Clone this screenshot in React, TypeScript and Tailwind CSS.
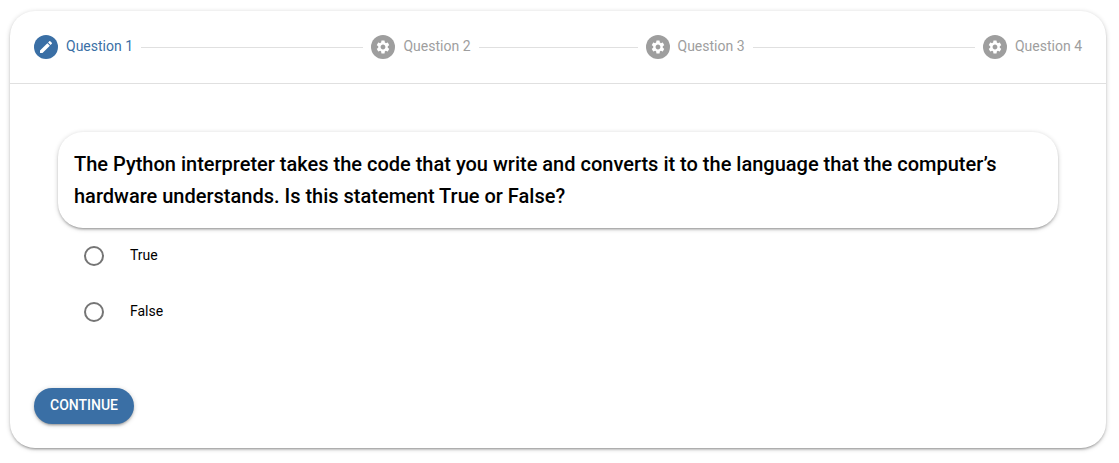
import { Fragment, useState } from "react";
import { MdEdit, MdSettings } from "react-icons/md";

const steps = [
  { title: "Question 1", line: "grow-[221]" },
  { title: "Question 2", line: "grow-[158]" },
  { title: "Question 3", line: "grow-[221]" },
  { title: "Question 4", line: "" },
];

const options = ["True", "False"];

const elevation =
  "shadow-[0_1px_5px_rgba(0,0,0,0.2),0_2px_2px_rgba(0,0,0,0.14),0_3px_1px_-2px_rgba(0,0,0,0.12)]";

function Stepper({ current }: { current: number }) {
  return (
    <nav
      aria-label="Questions"
      className="flex h-[73px] items-center gap-2 border-b border-black/12 px-6"
    >
      {steps.map((step, index) => {
        const active = index === current;
        const Icon = active ? MdEdit : MdSettings;
        return (
          <Fragment key={step.title}>
            <div
              aria-current={active ? "step" : undefined}
              className={`flex items-center gap-2 whitespace-nowrap ${
                active ? "text-[#3a6fa5]" : "text-[#9e9e9e]"
              }`}
            >
              <span
                className={`flex size-6 items-center justify-center rounded-full text-white ${
                  active ? "bg-[#3a6fa5]" : "bg-[#9e9e9e]"
                }`}
              >
                <Icon className="size-4" aria-hidden="true" />
              </span>
              <span className="pb-0.5 text-sm leading-[14px]">{step.title}</span>
            </div>
            {step.line && <div className={`h-px basis-0 bg-black/12 ${step.line}`} />}
          </Fragment>
        );
      })}
    </nav>
  );
}

export default function App() {
  const [answer, setAnswer] = useState<string | null>(null);

  return (
    <main className="bg-white pt-[11px] pr-[13px] pb-[15px] pl-2.5 font-[Roboto,sans-serif] text-black">
      <form
        onSubmit={(event) => event.preventDefault()}
        className={`rounded-[25px] bg-white ${elevation}`}
      >
        <Stepper current={0} />
        <fieldset aria-labelledby="question" className="px-12 pt-12">
          <h1
            id="question"
            className={`rounded-[25px] p-4 text-xl leading-8 font-medium ${elevation}`}
          >
            The Python interpreter takes the code that you write and converts it to the language
            that the computer’s hardware understands. Is this statement True or False?
          </h1>
          <div className="px-4">
            {options.map((option) => (
              <label key={option} className="flex h-14 cursor-pointer items-center gap-4 text-sm">
                <span className="flex size-10 items-center justify-center">
                  <input
                    type="radio"
                    name="answer"
                    value={option}
                    checked={answer === option}
                    onChange={() => setAnswer(option)}
                    className="size-5 cursor-pointer appearance-none rounded-full border-2 border-[#757575] checked:border-[#3a6fa5] checked:bg-[#3a6fa5] checked:bg-clip-content checked:p-[3px]"
                  />
                </span>
                <span className="pb-0.5">{option}</span>
              </label>
            ))}
          </div>
        </fieldset>
        <div className="px-6 pt-12 pb-6">
          <button
            type="submit"
            className={`flex h-9 cursor-pointer items-center rounded-[25px] bg-[#3a6fa5] px-4 pb-0.5 text-sm font-medium text-white uppercase ${elevation}`}
          >
            Continue
          </button>
        </div>
      </form>
    </main>
  );
}
